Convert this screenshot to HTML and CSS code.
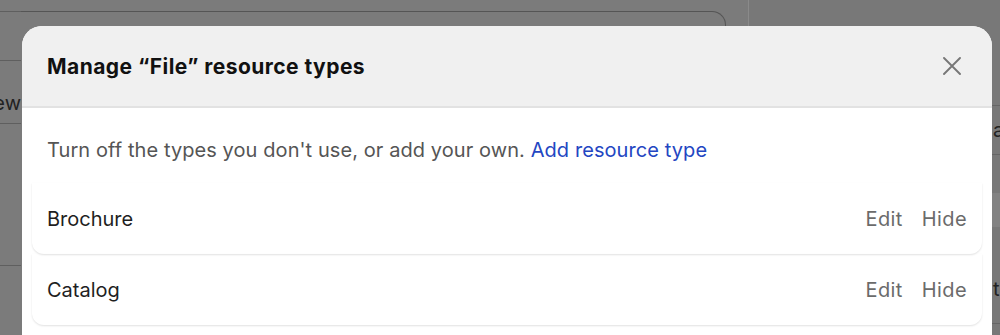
FILE: index.html
```html
<!DOCTYPE html>
<html lang="en">
<head>
	<meta charset="utf-8">
	<title>Manage resource types</title>
	<link rel="stylesheet" href="styles.css">
</head>
<body>
<div class="page">
	<div class="page-side">
		<div class="side-row"></div>
		<div class="side-row"><span>New</span></div>
		<div class="side-row tall"></div>
		<div class="side-row"></div>
	</div>
	<div class="page-main">
		<div class="search-box"></div>
	</div>
	<div class="page-aside">
		<div class="aside-row">a</div>
		<div class="aside-row shade"></div>
		<div class="aside-row">ti</div>
	</div>
</div>

<div class="modal">
	<header class="modal-head">
		<h1>Manage “File” resource types</h1>
		<button class="close" type="button" aria-label="Close">
			<svg width="18" height="18" viewBox="0 0 18 18"><path d="M1 1 L17 17 M17 1 L1 17" stroke="#777" stroke-width="1.9" fill="none" stroke-linecap="round"/></svg>
		</button>
	</header>
	<div class="modal-body">
		<p class="intro">Turn off the types you don't use, or add your own. <a href="#">Add resource type</a></p>
		<ul class="types">
			<li><span class="name">Brochure</span><span class="actions"><a href="#">Edit</a><a href="#">Hide</a></span></li>
			<li><span class="name">Catalog</span><span class="actions"><a href="#">Edit</a><a href="#">Hide</a></span></li>
		</ul>
	</div>
</div>
</body>
</html>
```
FILE: styles.css
```css
html, body{
	margin: 0;
	height: 100%;
	overflow: hidden;
}
body{
	background: #7b7b7b;
	font-family: Inter, "Liberation Sans", sans-serif;
	color: #1f1f1f;
}
.page{
	display: flex;
	height: 335px;
}
.page-side{
	width: 21px;
	padding-top: 11px;
	overflow: hidden;
}
.side-row{
	height: 48px;
	border-top: 1px solid #5f5f5f;
	display: flex;
	justify-content: flex-end;
	align-items: flex-end;
	color: #222;
	font-size: 20px;
	white-space: nowrap;
}
.side-row span{
	line-height: 28px;
	padding-bottom: 6px;
}
.side-row + .side-row{
	height: 62px;
}
.side-row.tall{
	height: 141px;
}
.side-row:last-child{
	height: 24px;
}
.page-main{
	flex: 1;
	padding-top: 11px;
	border-right: 1px solid #8a8a8a;
}
.search-box{
	height: 40px;
	margin-right: 22px;
	border-top: 1px solid #555;
	border-right: 1px solid #555;
	border-radius: 0 14px 0 0;
}
.page-aside{
	width: 251px;
	padding-top: 105px;
	background: #787878;
	overflow: hidden;
}
.aside-row{
	height: 48px;
	border-top: 1px solid #656565;
	border-bottom: 1px solid #656565;
	color: #222;
	font-size: 20px;
	line-height: 48px;
	padding-left: 244px;
	white-space: nowrap;
}
.aside-row.shade{
	height: 34px;
	margin-top: 38px;
	background: #828282;
	border: 0;
}
.aside-row:last-child{
	border-top: 0;
	height: 96px;
	line-height: 124px;
}

.modal{
	position: absolute;
	left: 22px;
	top: 26px;
	width: 970px;
	height: 320px;
	background: #fff;
	border-radius: 20px 20px 0 0;
	overflow: hidden;
}
.modal-head{
	display: flex;
	align-items: center;
	justify-content: space-between;
	height: 80px;
	padding: 0 31px 0 25px;
	background: #f0f0f0;
	border-bottom: 2px solid #e2e2e2;
}
.modal-head h1{
	margin: 0;
	font-size: 21px;
	font-weight: 700;
	color: #111;
	letter-spacing: 0.45px;
}
.close{
	background: none;
	border: 0;
	padding: 0;
	width: 18px;
	height: 18px;
	display: flex;
}
.modal-body{
	padding: 28px 10px 0;
}
.intro{
	margin: 0 0 19px 15px;
	font-size: 20px;
	line-height: 28px;
	letter-spacing: 0.08px;
	color: #555;
}
.intro a{
	color: #2346c2;
	text-decoration: none;
}
.types{
	list-style: none;
	margin: 0;
	padding: 0;
}
.types li{
	display: flex;
	align-items: center;
	justify-content: space-between;
	height: 71px;
	padding: 0 15px;
	border-radius: 0 0 12px 12px;
	box-shadow: 0 1px 2px rgba(0, 0, 0, .12);
	font-size: 20px;
}
.name{
	color: #1f1f1f;
}
.actions a{
	color: #6b6b6b;
	text-decoration: none;
	margin-left: 19px;
	letter-spacing: 0.4px;
}
```
